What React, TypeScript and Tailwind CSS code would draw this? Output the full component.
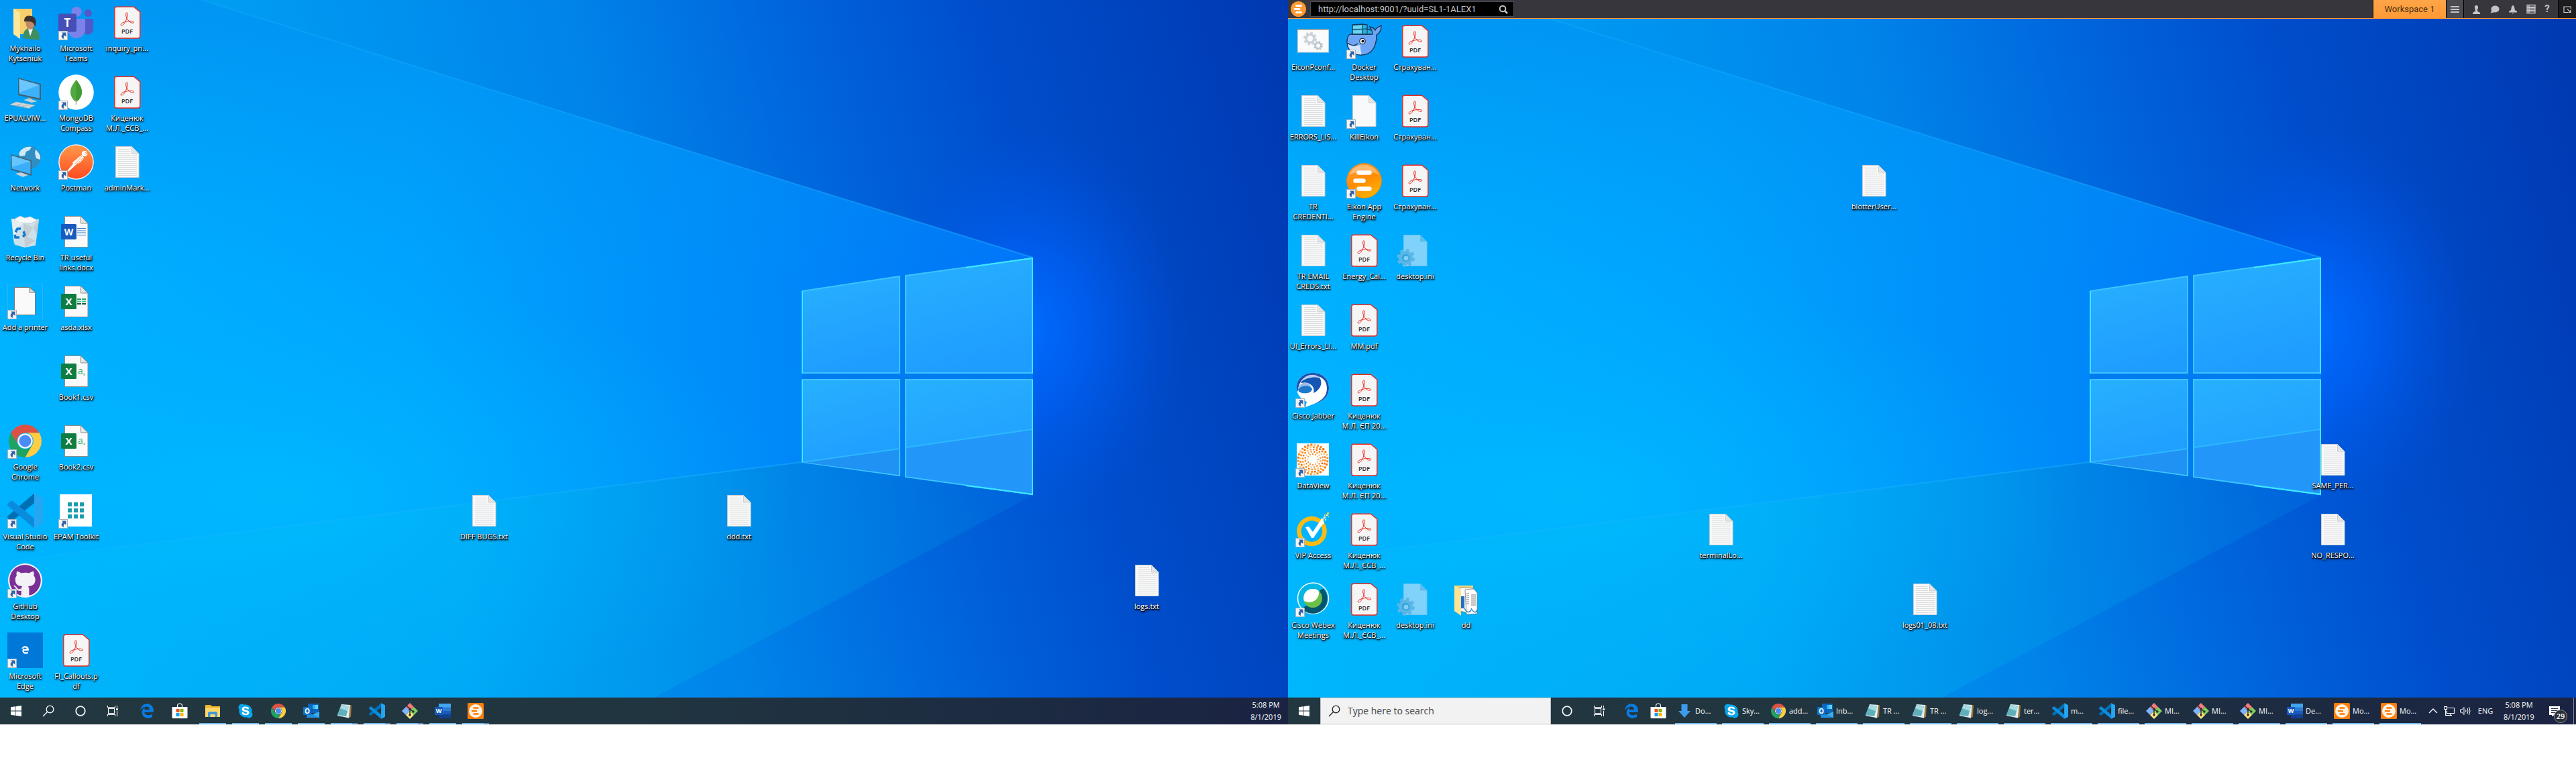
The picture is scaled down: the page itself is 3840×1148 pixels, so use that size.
import React from "react";
import { FaEdgeLegacy, FaSkype, FaGithub } from "react-icons/fa6";

/* ---------- wallpaper ---------- */

function Wallpaper() {
  return (
    <svg
      aria-hidden="true"
      className="absolute inset-0 h-full w-full"
      viewBox="0 0 1920 1080"
      preserveAspectRatio="none"
    >
      <defs>
        <linearGradient id="wpBase" x1="0" y1="0.15" x2="1" y2="0">
          <stop offset="0" stopColor="#00aaf8" />
          <stop offset="0.2" stopColor="#009cf2" />
          <stop offset="0.45" stopColor="#0084ea" />
          <stop offset="0.6" stopColor="#0068de" />
          <stop offset="0.76" stopColor="#004ecc" />
          <stop offset="1" stopColor="#0038b0" />
        </linearGradient>
        <linearGradient id="wpCone" x1="0" y1="0" x2="1" y2="0">
          <stop offset="0" stopColor="#00b2ff" />
          <stop offset="0.4" stopColor="#00a4fe" />
          <stop offset="0.7" stopColor="#008efa" stopOpacity="0.95" />
          <stop offset="1" stopColor="#007cff" stopOpacity="0.75" />
        </linearGradient>
        <linearGradient id="wpLow" x1="0" y1="0" x2="1" y2="0">
          <stop offset="0" stopColor="#00b6fc" />
          <stop offset="0.45" stopColor="#00aaf6" stopOpacity="0.95" />
          <stop offset="0.7" stopColor="#0094ea" stopOpacity="0.75" />
          <stop offset="1" stopColor="#0074e0" stopOpacity="0.35" />
        </linearGradient>
        <linearGradient id="wpShade" x1="0" y1="0" x2="0" y2="1">
          <stop offset="0" stopColor="#0086ea" stopOpacity="0.6" />
          <stop offset="0.5" stopColor="#0090f0" stopOpacity="0" />
        </linearGradient>
        <radialGradient id="wpGlow">
          <stop offset="0" stopColor="#006cff" stopOpacity="1" />
          <stop offset="0.4" stopColor="#0062f8" stopOpacity="0.7" />
          <stop offset="1" stopColor="#0052e0" stopOpacity="0" />
        </radialGradient>
        <radialGradient id="wpBright">
          <stop offset="0" stopColor="#00beff" stopOpacity="0.7" />
          <stop offset="1" stopColor="#00b4ff" stopOpacity="0" />
        </radialGradient>
        <linearGradient id="wpBeam" x1="0" y1="0" x2="1" y2="0">
          <stop offset="0" stopColor="#20bcff" stopOpacity="0.2" />
          <stop offset="1" stopColor="#20b0ff" stopOpacity="0.5" />
        </linearGradient>
        <linearGradient id="wpPane" x1="0" y1="0" x2="0.3" y2="1">
          <stop offset="0" stopColor="#27b0ff" />
          <stop offset="1" stopColor="#1f9dff" />
        </linearGradient>
      </defs>
      <rect width="1920" height="1080" fill="url(#wpBase)" />
      <ellipse cx="1530" cy="490" rx="240" ry="300" fill="url(#wpGlow)" />
      <path d="M0 0H300L1540 384V738L1195 689L0 838Z" fill="url(#wpCone)" />
      <path d="M0 0H300L1540 384V738L1195 689L0 838Z" fill="url(#wpShade)" />
      <path d="M0 838L1195 689L1540 738L900 1080H0Z" fill="url(#wpLow)" />
      <ellipse cx="420" cy="740" rx="760" ry="340" fill="url(#wpBright)" />
      <path d="M300 0L1540 384" stroke="url(#wpBeam)" strokeWidth="2" />
      <path d="M0 838L1195 689" stroke="url(#wpBeam)" strokeWidth="2" />
      <path d="M1195 433L1540 384V738L1195 689Z" fill="#007cf0" />
      <g stroke="#3cc4ff" strokeWidth="2" fill="url(#wpPane)">
        <path d="M1196 434L1341 412V556H1196Z" />
        <path d="M1350 411L1539 385V556H1350Z" />
        <path d="M1196 566H1341V709L1196 689Z" />
        <path d="M1350 566H1539V737L1350 711Z" />
      </g>
      <path d="M1197 689L1340 669V708Z" fill="#2092f4" />
      <path d="M1351 668L1538 641V735L1351 710Z" fill="#2396fa" />
      <path d="M1197 689L1341 669M1351 667L1539 640" stroke="#2cb8ff" strokeWidth="2" />
      <path d="M1196 557V434M1196 689V566M1539 557V385L1440 399M1539 566V737L1440 724" stroke="#3ce8ff" strokeWidth="2" fill="none" />
    </svg>
  );
}

/* ---------- desktop icons (53 x 53 canvas) ---------- */

function Canvas({ children }: { children: React.ReactNode }) {
  return (
    <svg aria-hidden="true" viewBox="0 0 53 53" className="h-[53px] w-[53px] shrink-0">
      {children}
    </svg>
  );
}

function ShortcutArrow() {
  return (
    <g>
      <rect x="0.5" y="39.5" width="13" height="13" fill="#f4f4f4" stroke="#a9b4bd" />
      <path d="M5 41.500H11.500V48L9.300 45.800C7.600 47.200 7.400 48.800 8.500 51C4.500 50.500 3 46.500 7 43.600Z" fill="#2f62a8" />
    </g>
  );
}

function Page({ fill = "#fafafa", stroke = "#8d8d8d" }: { fill?: string; stroke?: string }) {
  return (
    <g>
      <path d="M9.500 3.500H33.500L44 14V49.500H9.500Z" fill={fill} stroke={stroke} />
      <path d="M33.500 3.500V14H44Z" fill="#e4e4e4" stroke={stroke} />
    </g>
  );
}

const TextDoc = () => (
  <Canvas>
    <Page fill="#f8f8f8" stroke="#c6cdd2" />
    <path d="M13 7.500H30M13 10.500H31M13 13.500H31M13 16.500H41M13 19.500H41M13 22.500H41M13 25.500H41M13 28.500H41M13 31.500H41M13 34.500H41M13 37.500H41M13 40.500H41M13 43.500H41M13 46.500H41" stroke="#d9dbdd" />
  </Canvas>
);

const Pdf = () => (
  <Canvas>
    <path d="M11 3.200H36.500L45.800 11V46.500Q45.800 50 42 50H11Q7.700 50 7.700 46.500V6.500Q7.700 3.200 11 3.200Z" fill="#f6f5f5" stroke="#ea2a20" strokeWidth="1.500" />
    <path d="M25.600 12C27.800 11.500 27.600 15 26 20C24.500 25 21.500 30.500 18.500 31C16.200 31.200 16.500 28.500 20 26.800C25 24.500 33 23.800 35.800 25C38 26.500 35.500 28 32.500 26.800C29 25.300 25.500 20.500 24.900 17C24.400 14.200 24.600 12.300 25.600 12Z" fill="none" stroke="#ea2a20" strokeWidth="1" />
    <text x="26.500" y="43" textAnchor="middle" fontFamily="Open Sans, sans-serif" fontWeight="600" fontSize="9" fill="#2c2c2c">PDF</text>
  </Canvas>
);

const WordDoc = () => (
  <Canvas>
    <Page />
    <path d="M28 21.500H41M28 25H41M28 28H41M28 31.500H41" stroke="#3a7fce" strokeWidth="1.200" />
    <rect x="4" y="15" width="23" height="23" rx="1.500" fill="#185abd" />
    <text x="15.500" y="31.500" textAnchor="middle" fontFamily="Open Sans, sans-serif" fontWeight="700" fontSize="14" fill="#fff">W</text>
  </Canvas>
);

const ExcelDoc = () => (
  <Canvas>
    <Page />
    <path d="M28 23H34M35 23H41" stroke="#21a366" strokeWidth="2" />
    <path d="M28 26.500H34M35 26.500H41" stroke="#33c481" strokeWidth="2" />
    <path d="M28 30H34M35 30H41" stroke="#185c37" strokeWidth="2" />
    <rect x="4" y="15" width="23" height="23" rx="1.500" fill="#107c41" />
    <text x="15.500" y="32" textAnchor="middle" fontFamily="Open Sans, sans-serif" fontWeight="700" fontSize="15" fill="#fff">X</text>
  </Canvas>
);

const CsvDoc = () => (
  <Canvas>
    <Page />
    <text x="29" y="31" fontFamily="Open Sans, sans-serif" fontSize="14" fill="#21b573">a,</text>
    <rect x="4" y="15" width="23" height="23" rx="1.500" fill="#107c41" />
    <text x="15.500" y="32" textAnchor="middle" fontFamily="Open Sans, sans-serif" fontWeight="700" fontSize="15" fill="#fff">X</text>
  </Canvas>
);

const UserFolder = () => (
  <Canvas>
    <path d="M9 6H37V44H19Z" fill="#f7cf6c" />
    <path d="M9 6L19 12V51L9 44Z" fill="#fde79a" />
    <path d="M23 51C23 40 27 35 35 34C44 35 48 40 48 52C38 52 30 52 23 49Z" fill="#3d8f62" />
    <path d="M31 36L34 47L38 36Z" fill="#f3f6f8" />
    <path d="M27 20C27 34 30 36 34 37C39 36 41 32 41 22Z" fill="#c08a68" />
    <path d="M25 25C25 16 31 16 36 17C43 18 44 27 41 33C40 27 37 25 31 25Z" fill="#3a322e" />
  </Canvas>
);

const Computer = () => (
  <Canvas>
    <path d="M16 5L50 14V38L16 31Z" fill="#44606f" />
    <path d="M17.500 7L48 15.500V35.500L17.500 29Z" fill="#3db2fb" />
    <path d="M17.500 7L48 15.500L18 27Z" fill="#69c6ff" />
    <path d="M31 34L37 36V39L30 38Z" fill="#8b9ba5" />
    <path d="M24 38L32 36L45 40L36 42Z" fill="#c4cfd5" />
    <path d="M4 45L13 41L41 46L32 50.500Z" fill="#e2e6e8" stroke="#98a4ab" strokeWidth="0.800" />
    <path d="M8 45L33 49M11 43.500L37 47.500M13 47L21 43M21 48L29 44.500" stroke="#a3adb3" strokeWidth="0.800" />
  </Canvas>
);

const NetworkIcon = () => (
  <Canvas>
    <circle cx="33" cy="20" r="17" fill="#2f8ec4" />
    <path d="M20 9C25 4 31 3 36 4L33 9L28 11L26 17L19 18L17 14ZM42 8C47 12 50 17 49 23L43 21L41 14Z" fill="#cfeaf6" />
    <path d="M5 15L36 24V47L5 38Z" fill="#44606f" />
    <path d="M6.500 17L34.500 25.500V44.500L6.500 36.500Z" fill="#3aaefa" />
    <path d="M6.500 17L34.500 25.500L7 34Z" fill="#66c5ff" />
    <path d="M12 44L20 42L31 46L23 49Z" fill="#c8d2d8" />
  </Canvas>
);

const RecycleBin = () => (
  <Canvas>
    <path d="M6 7L47 8L42 47L26 50L11 46Z" fill="#dfe4e8" fillOpacity="0.92" />
    <path d="M10 8L19 3L26 6L34 4L44 9L36 14L18 13Z" fill="#f6f8f9" stroke="#bcc6cd" strokeWidth="0.800" />
    <path d="M24 14L38 20L30 34L42 40L26 50ZM47 8L38 20L44 32Z" fill="#c4cdd3" />
    <path d="M6 7L24 14L14 22L10 46Z" fill="#eef1f3" fillOpacity="0.8" />
    <path d="M12 27L15 22H20M24 26L26 31L23 34M18 35H12L11 31" fill="none" stroke="#1579d0" strokeWidth="3.500" />
  </Canvas>
);

const Printer = () => (
  <Canvas>
    <rect x="0.500" y="0.500" width="52" height="52" fill="none" stroke="#3fb6f4" strokeOpacity="0.7" />
    <path d="M10.500 5.500H33L41.500 13V46.500H10.500Z" fill="#fafafa" stroke="#777" />
    <path d="M33 5.500V13H41.500Z" fill="#ddd" stroke="#777" />
    <ShortcutArrow />
  </Canvas>
);

const PlainShortcut = () => (
  <Canvas>
    <Page fill="#f8f9fa" stroke="#c6cdd2" />
    <ShortcutArrow />
  </Canvas>
);

const Teams = () => (
  <Canvas>
    <circle cx="44.300" cy="12.500" r="5.600" fill="#5059c9" />
    <path d="M36 21H50.500Q52 21 52 22.500V35A8 8 0 0 1 36 38Z" fill="#5059c9" />
    <circle cx="27" cy="10.500" r="7.600" fill="#7b83eb" />
    <path d="M14 21H38.500Q40 21 40 22.500V37A13 13 0 0 1 14 37Z" fill="#7b83eb" />
    <rect x="0" y="13.500" width="27" height="27" rx="2" fill="#464eb8" />
    <text x="13.500" y="33" textAnchor="middle" fontFamily="Open Sans, sans-serif" fontWeight="700" fontSize="17" fill="#fff">T</text>
    <ShortcutArrow />
  </Canvas>
);

const Mongo = () => (
  <Canvas>
    <circle cx="26.500" cy="26.500" r="26.300" fill="#fff" />
    <path d="M26.500 8C32 15 35 20 35 26C35 33 31 38 26.500 41C22 38 18 33 18 26C18 20 21 15 26.500 8Z" fill="#4faa41" />
    <path d="M26.500 8C32 15 35 20 35 26C35 33 31 38 26.500 41Z" fill="#439934" />
    <path d="M26.500 38V45" stroke="#b8a68b" strokeWidth="1.500" />
    <ShortcutArrow />
  </Canvas>
);

const Postman = () => (
  <Canvas>
    <defs>
      <linearGradient id="postman" x1="0" y1="0" x2="0" y2="1">
        <stop offset="0" stopColor="#ff9a4a" />
        <stop offset="1" stopColor="#ff4a20" />
      </linearGradient>
    </defs>
    <circle cx="26.500" cy="26.500" r="25.600" fill="url(#postman)" stroke="#fff3ec" strokeWidth="1.400" />
    <circle cx="39" cy="14" r="4.300" fill="#fff" />
    <path d="M40 12L43 13.500L40 15" fill="none" stroke="#ff7a38" strokeWidth="0.800" />
    <path d="M35 16L38 20C35 26 30 29 27 30L15 41L13.500 39.500L22 29L21 27C26 24 31 18 35 16Z" fill="#fff" />
    <path d="M24 30L35 18M26 31L36 21" stroke="#ff8a45" strokeWidth="0.900" />
    <ShortcutArrow />
  </Canvas>
);

function ChromeArt() {
  return (
    <g>
      <path d="M24 12H44.800A24 24 0 0 0 3.200 12L13.600 30A12 12 0 0 1 24 12Z" fill="#dd5144" />
      <path d="M3.200 12A24 24 0 0 0 24 48L34.400 30A12 12 0 0 1 13.600 30Z" fill="#1da362" />
      <path d="M44.800 12A24 24 0 0 1 24 48L34.400 30A12 12 0 0 0 24 12Z" fill="#ffcd42" />
      <circle cx="24" cy="24" r="11" fill="#f4f6f8" />
      <circle cx="24" cy="24" r="8.800" fill="#4a8bf5" />
    </g>
  );
}

const Chrome = () => (
  <Canvas>
    <g transform="translate(2 2) scale(1.020)">
      <ChromeArt />
    </g>
    <ShortcutArrow />
  </Canvas>
);

function CodeArt() {
  return (
    <g>
      <path d="M40 0.500L1 34Q-1 36 1 38L5 41.500Q7 42 8 41L40 15Z" fill="#0070b5" />
      <path d="M5 12Q7 11 8 12L40 38V52.500L1 19.500Q-1 17.500 1 15.500Z" fill="#0a8bdd" />
      <path d="M40 0.500L53 7V46L40 52.500Z" fill="#25a6f2" />
    </g>
  );
}

const VsCode = () => (
  <Canvas>
    <CodeArt />
    <ShortcutArrow />
  </Canvas>
);

const GitHubDesktop = () => (
  <Canvas>
    <circle cx="26.500" cy="26.500" r="25.500" fill="#f4f1f6" />
    <FaGithub x="2.500" y="2.500" size={48} color="#7a2f96" />
    <ShortcutArrow />
  </Canvas>
);

const EdgeTile = () => (
  <Canvas>
    <rect width="53" height="53" fill="#0078d7" />
    <FaEdgeLegacy x="20.500" y="20" size={12} color="#fff" />
    <ShortcutArrow />
  </Canvas>
);

const Toolkit = () => (
  <Canvas>
    <rect x="2" y="2" width="48" height="48" fill="#fff" />
    <path d="M14 17H20M23 17H29M32 17H38M14 26H20M23 26H29M32 26H38M14 35H20M23 35H29M32 35H38" stroke="#1a9cb0" strokeWidth="6" />
    <ShortcutArrow />
  </Canvas>
);

function Gear({ cx, cy, r, fill, hole }: { cx: number; cy: number; r: number; fill: string; hole: string }) {
  return (
    <g>
      <circle cx={cx} cy={cy} r={r * 0.78} fill={fill} />
      <circle cx={cx} cy={cy} r={r * 0.86} fill="none" stroke={fill} strokeWidth={r * 0.28} strokeDasharray={`${r * 0.36} ${r * 0.315}`} />
      <circle cx={cx} cy={cy} r={r * 0.42} fill={hole} />
    </g>
  );
}

const ConfigWindow = () => (
  <Canvas>
    <rect x="3.500" y="9" width="46" height="34" fill="#fbfbfb" stroke="#c8ccd0" />
    <path d="M3 9H50" stroke="#8e979e" strokeWidth="1.500" />
    <Gear cx={22} cy={22.500} r={10} fill="#c9d2d9" hole="#fbfbfb" />
    <Gear cx={34} cy={33} r={7} fill="#b9c5ce" hole="#fbfbfb" />
  </Canvas>
);

const IniFile = () => (
  <Canvas>
    <path d="M9.500 3.500H34L44 13.500V49.500H9.500Z" fill="#80d2fb" stroke="#6cc6f2" />
    <path d="M34 3.500V13.500H44Z" fill="#5cbdec" />
    <Gear cx={12.500} cy={37.500} r={13.500} fill="#5bb6e4" hole="#2fa4e0" />
    <circle cx="13" cy="38" r="3.500" fill="#7fd0f8" />
  </Canvas>
);

const Docker = () => (
  <Canvas>
    <path d="M36 16C40 13 37 9 35 5C39 6 42 7 43 10C45 6 48 5 52 3C52 10 49 15 45 17C45 36 37 47 22 47C8 47 1 38 1 27C1 20 3 17 6 16Z" fill="#6ea6f5" stroke="#1c2c50" strokeWidth="1.300" />
    <path d="M1.500 28C8 37 18 32 21 32C20 40 24 45 22 46.500C9 46 3 39 1.500 28Z" fill="#d3e6fb" />
    <path d="M1.500 29C6 33 13 34 17 30" fill="none" stroke="#1c2c50" strokeWidth="1.200" />
    <path d="M9 2L24 1L31 2V9L38 10L39 16H9Z" fill="#2bb0dc" stroke="#123a58" strokeWidth="1.300" />
    <path d="M9 9L31 8M24 1V16M31 9V16" stroke="#123a58" />
    <path d="M10 4L23 2.500V7.500L10 8ZM10 10.500L23 9.500V15H10Z" fill="#6fd3ee" />
    <circle cx="24" cy="26.500" r="4.200" fill="#fff" stroke="#1c2c50" strokeWidth="1.300" />
    <circle cx="24.500" cy="26.500" r="2" fill="#111" />
    <ShortcutArrow />
  </Canvas>
);

const EikonEngine = () => (
  <Canvas>
    <defs>
      <linearGradient id="eikon" x1="0.200" y1="0" x2="0.700" y2="1">
        <stop offset="0" stopColor="#ff9a3c" />
        <stop offset="0.500" stopColor="#ff8c00" />
        <stop offset="1" stopColor="#ffb300" />
      </linearGradient>
    </defs>
    <circle cx="26.500" cy="26.500" r="25.800" fill="url(#eikon)" stroke="#f58a10" />
    <path d="M4 18C8 8 17 3 26.500 3C36 3 45 8 49 18C38 11 15 11 4 18Z" fill="#fff" fillOpacity="0.350" />
    <path d="M18.500 14.500H34.500M13.500 26.500H25.500M18.500 38.500H34.500" stroke="#fff" strokeWidth="6.500" strokeLinecap="round" />
    <ShortcutArrow />
  </Canvas>
);

const Jabber = () => (
  <Canvas>
    <path d="M26 1C40 1 50 10 50 23C50 37 40 44 28 47L15 52L17 44C8 40 2 33 2 23C2 10 12 1 26 1Z" fill="#fff" />
    <path d="M26 1C40 1 50 10 50 23C50 37 40 44 28 47C42 41 47 34 47 24C47 11 38 5 26 5C15 5 6 11 4 26C3 32 2 27 2 23C2 10 12 1 26 1Z" fill="#1d4fae" />
    <path d="M8 16C14 4 30 1 36 8C42 17 36 27 27 31C30 22 22 13 8 16Z" fill="#1456b4" />
    <path d="M8 14C15 2 31 1 37 9C30 6 19 7 8 14Z" fill="#b9cdf0" />
    <path d="M4 25C10 18 22 18 25 25C24 32 12 33 5 29Z" fill="#1e78cc" />
    <path d="M4 24C8 13 19 13 24 22C17 19 10 20 4 24Z" fill="#9cbbe8" />
    <ShortcutArrow />
  </Canvas>
);

const dotRings = [8, 11.500, 15, 18.500, 22];
const dotColors = ["#ff8000", "#f9922a", "#f26a00", "#ffc070", "#ff8410"];

const DataView = () => (
  <Canvas>
    <rect x="2" y="2" width="48" height="48" fill="#fff" />
    {dotRings.map((radius, ring) => {
      const count = 12 + ring * 4;
      return Array.from({ length: count }, (_, i) => {
        const a = (i / count) * Math.PI * 2 + ring * 0.2;
        const size = 1.800 + ring * 0.300;
        return (
          <rect
            key={`${ring}-${i}`}
            x={26 + Math.cos(a) * radius - size / 2}
            y={26 + Math.sin(a) * radius - size / 2}
            width={size}
            height={size}
            fill={dotColors[(i * 3 + ring) % 5]}
          />
        );
      });
    })}
    <ShortcutArrow />
  </Canvas>
);

const VipAccess = () => (
  <Canvas>
    <circle cx="24.500" cy="29" r="19" fill="none" stroke="#fdbb12" strokeWidth="6.500" />
    <path d="M15 23L20 22L26 30L38 12L43 15L27 39H24Z" fill="#fff" />
    <path d="M38 10H42V14H38ZM42 7H45V10H42ZM44 11H46V13H44ZM46 4H48V6H46ZM40 15H43V18H40Z" fill="#fff6d0" />
    <path d="M47 1H50V4H47ZM48 6H50V8H48ZM43 4H45V6H43Z" fill="#fdc93a" />
    <ShortcutArrow />
  </Canvas>
);

const Webex = () => (
  <Canvas>
    <circle cx="26.500" cy="25" r="23" fill="#02b6e8" stroke="#f2fbff" strokeWidth="1.600" />
    <path d="M42 11A6 6 0 0 0 36 15C40 20 40 28 35 33C29 39 21 39 17 36C13 37 10 40 12 43A22 22 0 0 0 42 11Z" fill="#05556e" />
    <circle cx="26" cy="25" r="14" fill="#6cc04a" />
    <path d="M13 29C10 18 18 10 27 11C33 11 36 14 35 18C34 28 24 34 13 29Z" fill="#fff" />
    <ShortcutArrow />
  </Canvas>
);

const DocsFolder = () => (
  <Canvas>
    <path d="M9 6H37V40H19Z" fill="#f7d57a" />
    <path d="M17 9L37 10V48L17 44Z" fill="#fafafa" stroke="#777" strokeWidth="0.800" />
    <path d="M25 12L38 11L43 17V48L27 49Z" fill="#fff" stroke="#777" strokeWidth="0.800" />
    <path d="M27 18H31M27 21H31M27 24H31M27 27H31M27 30H31M27 33H31M34 20H41M34 23H41M34 26H41M34 29H41M34 32H41M34 35H41" stroke="#555" strokeWidth="0.800" />
    <path d="M19 22H24V40H19Z" fill="#1d6fd0" />
    <path d="M24 40C28 47 32 47 34 42M34 40C38 47 42 47 43 42" fill="none" stroke="#2a86c4" strokeWidth="1.500" />
    <path d="M9 6L19 12V51L9 44Z" fill="#fde493" />
  </Canvas>
);

/* ---------- desktop ---------- */

type Item = { col: number; row: number; label: string[]; icon: React.ComponentType };

const leftItems: Item[] = [
  { col: 1, row: 1, label: ["Mykhailo", "Kytseniuk"], icon: UserFolder },
  { col: 1, row: 2, label: ["EPUALVIW..."], icon: Computer },
  { col: 1, row: 3, label: ["Network"], icon: NetworkIcon },
  { col: 1, row: 4, label: ["Recycle Bin"], icon: RecycleBin },
  { col: 1, row: 5, label: ["Add a printer"], icon: Printer },
  { col: 1, row: 7, label: ["Google", "Chrome"], icon: Chrome },
  { col: 1, row: 8, label: ["Visual Studio", "Code"], icon: VsCode },
  { col: 1, row: 9, label: ["GitHub", "Desktop"], icon: GitHubDesktop },
  { col: 1, row: 10, label: ["Microsoft", "Edge"], icon: EdgeTile },
  { col: 2, row: 1, label: ["Microsoft", "Teams"], icon: Teams },
  { col: 2, row: 2, label: ["MongoDB", "Compass"], icon: Mongo },
  { col: 2, row: 3, label: ["Postman"], icon: Postman },
  { col: 2, row: 4, label: ["TR useful", "links.docx"], icon: WordDoc },
  { col: 2, row: 5, label: ["asda.xlsx"], icon: ExcelDoc },
  { col: 2, row: 6, label: ["Book1.csv"], icon: CsvDoc },
  { col: 2, row: 7, label: ["Book2.csv"], icon: CsvDoc },
  { col: 2, row: 8, label: ["EPAM Toolkit"], icon: Toolkit },
  { col: 2, row: 10, label: ["FI_Callouts.p", "df"], icon: Pdf },
  { col: 3, row: 1, label: ["inquiry_pri..."], icon: Pdf },
  { col: 3, row: 2, label: ["Киценюк", "М.Л._ЄСВ_..."], icon: Pdf },
  { col: 3, row: 3, label: ["adminMark..."], icon: TextDoc },
  { col: 10, row: 8, label: ["DIFF BUGS.txt"], icon: TextDoc },
  { col: 15, row: 8, label: ["ddd.txt"], icon: TextDoc },
  { col: 23, row: 9, label: ["logs.txt"], icon: TextDoc },
];

const rightItems: Item[] = [
  { col: 1, row: 1, label: ["EiconPconf..."], icon: ConfigWindow },
  { col: 1, row: 2, label: ["ERRORS_LIS..."], icon: TextDoc },
  { col: 1, row: 3, label: ["TR", "CREDENTI..."], icon: TextDoc },
  { col: 1, row: 4, label: ["TR EMAIL", "CREDS.txt"], icon: TextDoc },
  { col: 1, row: 5, label: ["UI_Errors_LI..."], icon: TextDoc },
  { col: 1, row: 6, label: ["Cisco Jabber"], icon: Jabber },
  { col: 1, row: 7, label: ["DataView"], icon: DataView },
  { col: 1, row: 8, label: ["VIP Access"], icon: VipAccess },
  { col: 1, row: 9, label: ["Cisco Webex", "Meetings"], icon: Webex },
  { col: 2, row: 1, label: ["Docker", "Desktop"], icon: Docker },
  { col: 2, row: 2, label: ["KillEikon"], icon: PlainShortcut },
  { col: 2, row: 3, label: ["Eikon App", "Engine"], icon: EikonEngine },
  { col: 2, row: 4, label: ["Energy_Cal..."], icon: Pdf },
  { col: 2, row: 5, label: ["MM.pdf"], icon: Pdf },
  { col: 2, row: 6, label: ["Киценюк", "М.Л. ЄП 20..."], icon: Pdf },
  { col: 2, row: 7, label: ["Киценюк", "М.Л. ЄП 20..."], icon: Pdf },
  { col: 2, row: 8, label: ["Киценюк", "М.Л._ЄСВ_..."], icon: Pdf },
  { col: 2, row: 9, label: ["Киценюк", "М.Л._ЄСВ_..."], icon: Pdf },
  { col: 3, row: 1, label: ["Страхуван..."], icon: Pdf },
  { col: 3, row: 2, label: ["Страхуван..."], icon: Pdf },
  { col: 3, row: 3, label: ["Страхуван..."], icon: Pdf },
  { col: 3, row: 4, label: ["desktop.ini"], icon: IniFile },
  { col: 3, row: 9, label: ["desktop.ini"], icon: IniFile },
  { col: 4, row: 9, label: ["dd"], icon: DocsFolder },
  { col: 9, row: 8, label: ["terminalLo..."], icon: TextDoc },
  { col: 12, row: 3, label: ["blotterUser..."], icon: TextDoc },
  { col: 13, row: 9, label: ["logs01_08.txt"], icon: TextDoc },
  { col: 21, row: 7, label: ["SAME_PER..."], icon: TextDoc },
  { col: 21, row: 8, label: ["NO_RESPO..."], icon: TextDoc },
];

function DesktopGrid({ items }: { items: Item[] }) {
  return (
    <div className="relative grid flex-1 auto-rows-[104px] grid-cols-[repeat(auto-fill,76px)] content-start overflow-hidden">
      {items.map((item) => {
        const Icon = item.icon;
        return (
          <button
            key={`${item.col}-${item.row}`}
            type="button"
            style={{ gridColumn: item.col, gridRow: item.row }}
            className="flex w-[75px] flex-col items-center gap-1 pt-[7px]"
          >
            <Icon />
            <span className="flex flex-col items-center text-[11px] leading-[15px] whitespace-nowrap text-white [text-shadow:1px_1px_1px_#000,0_1px_2px_#000,1px_2px_3px_#000]">
              {item.label.map((line) => (
                <span key={line}>{line}</span>
              ))}
            </span>
          </button>
        );
      })}
    </div>
  );
}

/* ---------- taskbar icons (24 x 24) ---------- */

const glyph = "h-6 w-6 shrink-0";

const WinLogo = () => (
  <svg aria-hidden="true" viewBox="0 0 24 24" className={glyph}>
    <path d="M4 6.300L10.500 5.300V11.500H4ZM11.300 5.200L20 4V11.500H11.300ZM4 12.400H10.500V18.700L4 17.800ZM11.300 12.400H20V20L11.300 18.800Z" fill="#fff" />
  </svg>
);

const Magnifier = ({ color }: { color: string }) => (
  <svg aria-hidden="true" viewBox="0 0 24 24" className={glyph} fill="none" stroke={color} strokeWidth="1.300">
    <circle cx="14.500" cy="9.500" r="5.300" />
    <path d="M10.700 13.300L4 20" />
  </svg>
);

const Cortana = () => (
  <svg aria-hidden="true" viewBox="0 0 24 24" className={glyph}>
    <circle cx="12" cy="12" r="6.800" fill="none" stroke="#eef2f3" strokeWidth="1.800" />
  </svg>
);

const TaskView = () => (
  <svg aria-hidden="true" viewBox="0 0 24 24" className={glyph} fill="none" stroke="#fff" strokeWidth="1.100">
    <rect x="5.500" y="8.500" width="9" height="7" />
    <path d="M4.500 4V6.500H15.500V4M4.500 20V17.500H15.500V20M18.500 4V7M18.500 12V20" />
    <path d="M17 9.500H20" strokeWidth="2.500" />
  </svg>
);

const EdgeGlyph = () => <FaEdgeLegacy aria-hidden="true" className="h-[22px] w-6 shrink-0 text-[#0a7be0]" />;

const Store = () => (
  <svg aria-hidden="true" viewBox="0 0 24 24" className={glyph}>
    <path d="M8.500 7V4.500Q8.500 1 12 1Q15.500 1 15.500 4.500V7" fill="none" stroke="#fff" strokeWidth="1.200" />
    <path d="M0.500 6H23.500V21.500Q23.500 23 22 23H2Q0.500 23 0.500 21.500Z" fill="#fff" />
    <path d="M6.500 9H11.500V14H6.500Z" fill="#f25022" />
    <path d="M12.500 9H17.500V14H12.500Z" fill="#7fba00" />
    <path d="M6.500 15H11.500V20H6.500Z" fill="#00a4ef" />
    <path d="M12.500 15H17.500V20H12.500Z" fill="#ffb900" />
  </svg>
);

const Explorer = () => (
  <svg aria-hidden="true" viewBox="0 0 24 24" className={glyph}>
    <path d="M1 3H9L11 5H23V21H1Z" fill="#f3b32f" />
    <path d="M1 7H23V21H1Z" fill="#ffd868" />
    <path d="M5 21V15Q5 13 7 13H17Q19 13 19 15V21H15.500V17H8.500V21Z" fill="#3f97d9" />
  </svg>
);

const Skype = () => (
  <span className="relative flex h-6 w-6 shrink-0 items-center justify-center">
    <span className="absolute h-4 w-4 rounded-full bg-white" />
    <FaSkype aria-hidden="true" className="relative h-6 w-6 text-[#0aa5ea]" />
  </span>
);

const ChromeSmall = () => (
  <svg aria-hidden="true" viewBox="0 0 48 48" className="mx-px h-[22px] w-[22px] shrink-0">
    <ChromeArt />
  </svg>
);

const Outlook = () => (
  <svg aria-hidden="true" viewBox="0 0 24 24" className={glyph}>
    <path d="M7 1H23V15H7Z" fill="#0a66c0" />
    <path d="M14 3H22V9H14Z" fill="#33b0ec" />
    <path d="M18 3H22V9H18Z" fill="#50d9ff" />
    <path d="M7 9H14V15H7Z" fill="#0f5ba8" />
    <path d="M5 22V13L24 22ZM24 13V22H5Z" fill="#1f8fe0" />
    <path d="M24 13V22L14 17Z" fill="#38aef0" />
    <rect x="0" y="6" width="12" height="12" rx="1" fill="#0a72cf" />
    <text x="6" y="15.500" textAnchor="middle" fontFamily="Open Sans, sans-serif" fontWeight="700" fontSize="10" fill="#fff">O</text>
  </svg>
);

const Notepad = () => (
  <svg aria-hidden="true" viewBox="0 0 24 24" className={glyph}>
    <path d="M21 3L23 3.500L22 21L19 22Z" fill="#9a7434" />
    <path d="M8 2L21 3L19 22.500L2 19Z" fill="#e4eff1" />
    <path d="M8 3L19 4.500L15 20L1.500 18Z" fill="#5fb0bb" />
    <path d="M8 3L19 4.500L17 12L6 8Z" fill="#a5dbe0" />
  </svg>
);

const CodeSmall = () => (
  <svg aria-hidden="true" viewBox="0 0 53 53" className={glyph}>
    <CodeArt />
  </svg>
);

const Git = () => (
  <svg aria-hidden="true" viewBox="0 0 24 24" className={glyph}>
    <path d="M12 0L18 6L12 12L6 6Z" fill="#f77b7b" />
    <path d="M6 6L12 12L6 18L0 12Z" fill="#80b3ff" />
    <path d="M18 6L24 12L18 18L12 12Z" fill="#80d060" />
    <path d="M12 12L18 18L12 24L6 18Z" fill="#ffe680" />
    <path d="M7 4L12 9V18M12 9L17 13" fill="none" stroke="#2b2b2b" strokeWidth="1.500" />
    <circle cx="12" cy="9" r="1.700" fill="#2b2b2b" />
    <circle cx="12" cy="18" r="1.700" fill="#2b2b2b" />
    <circle cx="17" cy="13" r="1.700" fill="#2b2b2b" />
  </svg>
);

const WordSmall = () => (
  <svg aria-hidden="true" viewBox="0 0 24 24" className={glyph}>
    <path d="M6 1H24V7H6Z" fill="#41a5ee" />
    <path d="M6 6.500H24V12H6Z" fill="#2b7cd3" />
    <path d="M6 12H24V17.500H6Z" fill="#185abd" />
    <path d="M6 17.500H24V23H6Z" fill="#103f91" />
    <rect x="0" y="6" width="12" height="12" rx="1" fill="#185abd" />
    <text x="6" y="15.300" textAnchor="middle" fontFamily="Open Sans, sans-serif" fontWeight="700" fontSize="9" fill="#fff">W</text>
  </svg>
);

const EikonSmall = () => (
  <svg aria-hidden="true" viewBox="0 0 24 24" className={glyph}>
    <rect width="24" height="24" rx="1.500" fill="#ff7f0a" />
    <circle cx="12" cy="12" r="10" fill="#fff3e6" />
    <path d="M9.500 7.500H15.500M7 12H13M9.500 16.500H15.500" stroke="#ff7a00" strokeWidth="2.400" strokeLinecap="round" />
  </svg>
);

const Download = () => (
  <svg aria-hidden="true" viewBox="0 0 24 24" className={glyph}>
    <path d="M7.500 2H16.500V12H21L12 22L3 12H7.500Z" fill="#3d9bec" />
  </svg>
);

/* ---------- taskbars ---------- */

const bar = "relative flex h-10 bg-linear-to-r from-[#22373f] via-[#213540] via-50% to-[#1a2342] text-[11px] text-white";

function SystemButton({ label, children }: { label: string; children: React.ReactNode }) {
  return (
    <button type="button" aria-label={label} className="flex h-10 w-12 shrink-0 items-center justify-center">
      {children}
    </button>
  );
}

function Clock() {
  return (
    <time className="flex flex-col items-center justify-center leading-[18px] whitespace-nowrap">
      <span>5:08 PM</span>
      <span>8/1/2019</span>
    </time>
  );
}

const pinned: { name: string; icon: React.ComponentType; open: "none" | "one" | "many" }[] = [
  { name: "Microsoft Edge", icon: EdgeGlyph, open: "none" },
  { name: "Microsoft Store", icon: Store, open: "none" },
  { name: "File Explorer", icon: Explorer, open: "one" },
  { name: "Skype", icon: Skype, open: "one" },
  { name: "Google Chrome", icon: ChromeSmall, open: "one" },
  { name: "Outlook", icon: Outlook, open: "one" },
  { name: "Notepad", icon: Notepad, open: "many" },
  { name: "Visual Studio Code", icon: CodeSmall, open: "many" },
  { name: "Git Bash", icon: Git, open: "many" },
  { name: "Word", icon: WordSmall, open: "one" },
  { name: "Eikon", icon: EikonSmall, open: "many" },
];

const windows: [string, React.ComponentType][] = [
  ["Do...", Download],
  ["Sky...", Skype],
  ["add...", ChromeSmall],
  ["Inb...", Outlook],
  ["TR ...", Notepad],
  ["TR ...", Notepad],
  ["log...", Notepad],
  ["ter...", Notepad],
  ["m...", CodeSmall],
  ["file...", CodeSmall],
  ["MI...", Git],
  ["MI...", Git],
  ["MI...", Git],
  ["De...", WordSmall],
  ["Mo...", EikonSmall],
  ["Mo...", EikonSmall],
];

function LeftTaskbar() {
  return (
    <footer className={bar}>
      <SystemButton label="Start"><WinLogo /></SystemButton>
      <SystemButton label="Search"><Magnifier color="#fff" /></SystemButton>
      <SystemButton label="Cortana"><Cortana /></SystemButton>
      <SystemButton label="Task view"><TaskView /></SystemButton>
      <nav className="flex gap-[9px] pl-[7px]">
        {pinned.map(({ name, icon: Icon, open }) => (
          <button key={name} type="button" aria-label={name} className="flex h-10 w-10 flex-col items-center">
            <span className="flex flex-1 items-center pt-0.5"><Icon /></span>
            <span className="flex h-0.5 w-full">
              {open !== "none" && <span className="flex-1 bg-[#76b9ed]" />}
              {open === "many" && <span className="w-2 bg-[#5a8db5]" />}
            </span>
          </button>
        ))}
      </nav>
      <div className="ml-auto flex pr-2.5">
        <Clock />
      </div>
    </footer>
  );
}

function RightTaskbar() {
  return (
    <footer className={bar}>
      <SystemButton label="Start"><WinLogo /></SystemButton>
      <label className="flex w-[344px] shrink-0 items-center gap-2 border border-[#bdbdbd] bg-[#f2f2f2] pl-2">
        <Magnifier color="#222" />
        <input
          type="text"
          aria-label="Search"
          placeholder="Type here to search"
          className="w-full bg-transparent text-sm text-neutral-800 outline-none placeholder:text-[#404040]"
        />
      </label>
      <SystemButton label="Cortana"><Cortana /></SystemButton>
      <SystemButton label="Task view"><TaskView /></SystemButton>
      <nav className="flex shrink-0 pl-1">
        <button type="button" aria-label="Microsoft Edge" className="flex h-10 w-10 items-center justify-center"><EdgeGlyph /></button>
        <button type="button" aria-label="Microsoft Store" className="flex h-10 w-10 items-center justify-center"><Store /></button>
      </nav>
      <nav className="flex shrink-0 gap-2 pl-[5px]">
        {windows.map(([title, Icon], i) => (
          <button key={i} type="button" className="flex h-10 w-[62px] flex-col">
            <span className="flex flex-1 items-center gap-1 overflow-hidden pt-0.5 pl-0.5 whitespace-nowrap">
              <Icon />
              {title}
            </span>
            <span className="h-0.5 w-full bg-[#76b9ed]" />
          </button>
        ))}
      </nav>
      <div className="ml-auto flex shrink-0 items-center">
        <button type="button" aria-label="Show hidden icons" className="flex w-6 justify-center">
          <svg aria-hidden="true" viewBox="0 0 16 16" className="h-4 w-4" fill="none" stroke="#fff" strokeWidth="1.300"><path d="M2 11L8 5L14 11" /></svg>
        </button>
        <button type="button" aria-label="Network" className="flex w-6 justify-center">
          <svg aria-hidden="true" viewBox="0 0 16 16" className="h-4 w-4" fill="none" stroke="#fff" strokeWidth="1.200"><path d="M5 3.500H15.500V11.500H4.500V8M1 1.500H4.500V5.500H1ZM2.700 5.500V14.500H12M9.500 11.500V14.500" /></svg>
        </button>
        <button type="button" aria-label="Volume" className="flex w-6 justify-center">
          <svg aria-hidden="true" viewBox="0 0 16 16" className="h-4 w-4" fill="none" stroke="#fff" strokeWidth="1"><path d="M0.500 6H3L6 2.500V13.500L3 10H0.500ZM8.500 6Q9.500 8 8.500 10M11 4Q13 8 11 12M13.500 2Q16.500 8 13.500 14" /></svg>
        </button>
        <button type="button" className="w-9 text-center">ENG</button>
        <div className="flex w-16 justify-center"><Clock /></div>
        <button type="button" aria-label="Notifications" className="relative ml-[3px] flex h-10 w-10 items-center justify-center">
          <svg aria-hidden="true" viewBox="0 0 16 16" className="mr-1 h-4 w-4"><path d="M0 1H16V14H8L4 16V14H0Z" fill="#fff" /><path d="M3 4.500H13M3 7.500H13M3 10.500H9" stroke="#1c2a44" /></svg>
          <span className="absolute top-[18px] left-[17px] flex h-5 w-5 items-center justify-center rounded-full border border-[#8b8f96] bg-[#2b2f36] font-semibold">29</span>
        </button>
        <button type="button" aria-label="Show desktop" className="ml-1.5 h-10 w-1 border-l border-[#7d8595]" />
      </div>
    </footer>
  );
}

/* ---------- Eikon toolbar ---------- */

function Toolbar() {
  const tool = "flex h-full w-[27px] items-center justify-center";
  return (
    <header className="relative flex h-7 items-center border-b border-[#ff9a33] bg-[#37363d] font-['Roboto',sans-serif] text-[#c4c4c6]">
      <button type="button" aria-label="Eikon menu" className="ml-1 flex h-[23px] w-[23px] items-center justify-center rounded-full bg-[#ff9a33]">
        <svg aria-hidden="true" viewBox="0 0 23 23" className="h-[23px] w-[23px]"><path d="M8.500 6.500H15.500M6 11.500H13M8.500 16.500H15.500" stroke="#fff" strokeWidth="3" strokeLinecap="round" /></svg>
      </button>
      <label className="ml-1.5 flex h-[23px] w-[304px] items-center border border-[#4c4b52] bg-black pr-2 pl-[11px]">
        <input type="text" aria-label="Address" defaultValue="http://localhost:9001/?uuid=SL1-1ALEX1" className="min-w-0 flex-1 bg-transparent text-[13px] outline-none" />
        <svg aria-hidden="true" viewBox="0 0 14 14" className="h-3.5 w-3.5 shrink-0" fill="none" stroke="#c4c4c6" strokeWidth="2"><circle cx="6" cy="6" r="4.300" /><path d="M9 9L13 13" strokeWidth="2.500" /></svg>
      </label>
      <button type="button" className="ml-auto h-full w-[110px] border-x border-black bg-linear-to-b from-[#ffa548] to-[#ff9a35] text-[13px] text-[#4a3013]">
        Workspace 1
      </button>
      <button type="button" aria-label="Menu" className="flex h-full w-[26px] items-center justify-center border-r border-black bg-[#4c4b52]">
        <svg aria-hidden="true" viewBox="0 0 13 12" className="h-3 w-[13px]"><path d="M0 2H13M0 6H13M0 10H13" stroke="#c4c4c6" strokeWidth="2" /></svg>
      </button>
      <div className="flex h-full px-[5px]">
        <button type="button" aria-label="Profile" className={tool}>
          <svg aria-hidden="true" viewBox="0 0 13 14" className="h-3.5 w-[13px]" fill="#c4c4c6"><path d="M6.500 1C8.700 1 9.200 2.500 9 4.500C8.800 6.500 8 7 8 8V9.500L12 12V14H1V12L5 9.500V8C5 7 4.200 6.500 4 4.500C3.800 2.500 4.300 1 6.500 1Z" /></svg>
        </button>
        <button type="button" aria-label="Messages" className={tool}>
          <svg aria-hidden="true" viewBox="0 0 14 14" className="h-3.5 w-3.5" fill="#c4c4c6"><ellipse cx="7.500" cy="6.500" rx="6" ry="5" /><path d="M3 8L0.500 12.500L7 11Z" /></svg>
        </button>
        <button type="button" aria-label="Alerts" className={tool}>
          <svg aria-hidden="true" viewBox="0 0 14 14" className="h-3.5 w-3.5" fill="#c4c4c6"><path d="M7 1C10 2 9 6 10 8L13 10V11.500H1V10L4 8C5 6 4 2 7 1ZM5.500 12H8.500L7 13.500Z" /></svg>
        </button>
        <button type="button" aria-label="Lists" className={tool}>
          <svg aria-hidden="true" viewBox="0 0 14 15" className="h-[15px] w-3.5" fill="none" stroke="#c4c4c6" strokeWidth="1.300"><path d="M1 1.500H13V4.500H1ZM1 6H13V9H1ZM1 10.500H13V13.500H1Z" /><path d="M3 3H5M3 7.500H5M3 12H5" /></svg>
        </button>
        <button type="button" aria-label="Help" className="flex h-full w-[22px] items-center justify-center text-[15px] font-bold">?</button>
      </div>
      <button type="button" aria-label="Detach" className="flex h-full w-[27px] items-center justify-center border-l border-black bg-[#1d1d1f]">
        <svg aria-hidden="true" viewBox="0 0 12 12" className="h-3 w-3" fill="none" stroke="#d0d0d2" strokeWidth="1.200"><path d="M7 10.500H1V2H11.500V6M6 5.500L10.500 10M11 7V10.500H7.500" /></svg>
      </button>
    </header>
  );
}

export default function App() {
  return (
    <main className="flex bg-white font-['Open_Sans','Noto_Sans',sans-serif]">
      <section className="relative flex min-h-[1080px] min-w-0 flex-1 flex-col overflow-hidden">
        <Wallpaper />
        <DesktopGrid items={leftItems} />
        <LeftTaskbar />
      </section>
      <section className="relative flex min-w-0 flex-1 flex-col overflow-hidden">
        <Wallpaper />
        <Toolbar />
        <DesktopGrid items={rightItems} />
        <RightTaskbar />
      </section>
    </main>
  );
}
